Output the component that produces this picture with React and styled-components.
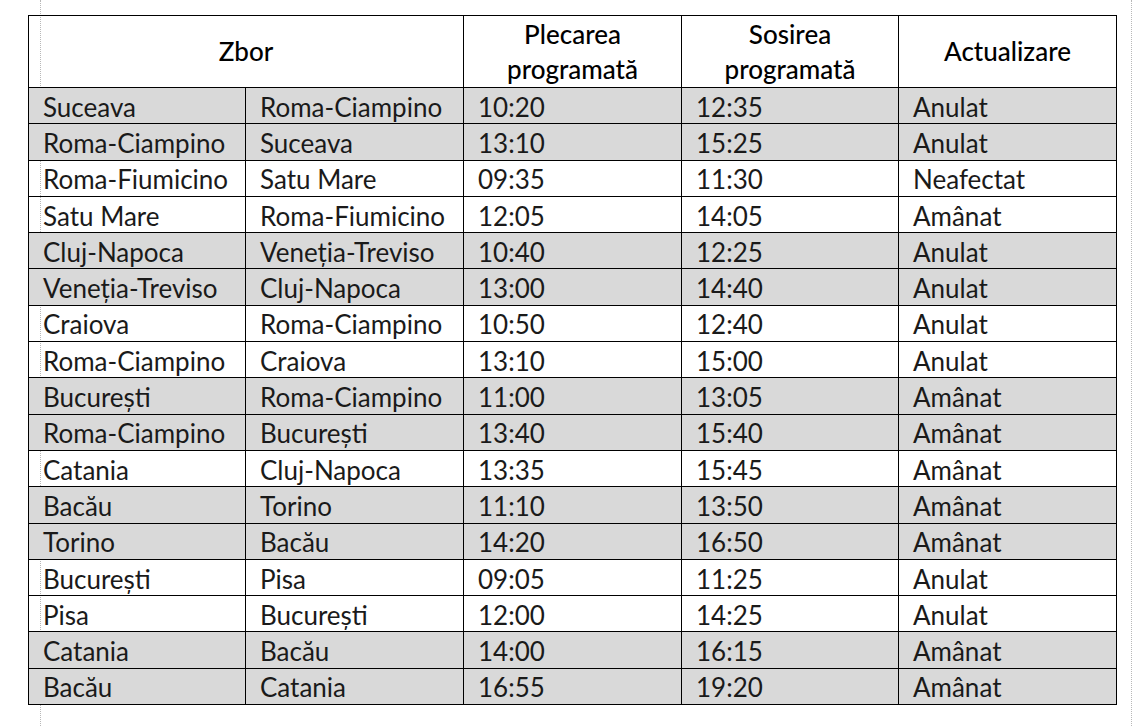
import React from 'react';
import styled, { createGlobalStyle } from 'styled-components';

const GlobalStyle = createGlobalStyle`
  html, body {
    margin: 0;
    padding: 0;
    background: #ffffff;
  }
  body {
    font-family: 'Lato', 'Carlito', 'Noto Sans', sans-serif;
    color: #000;
  }
`;

const flights = [
  ['Suceava', 'Roma-Ciampino', '10:20', '12:35', 'Anulat', true],
  ['Roma-Ciampino', 'Suceava', '13:10', '15:25', 'Anulat', true],
  ['Roma-Fiumicino', 'Satu Mare', '09:35', '11:30', 'Neafectat', false],
  ['Satu Mare', 'Roma-Fiumicino', '12:05', '14:05', 'Amânat', false],
  ['Cluj-Napoca', 'Veneția-Treviso', '10:40', '12:25', 'Anulat', true],
  ['Veneția-Treviso', 'Cluj-Napoca', '13:00', '14:40', 'Anulat', true],
  ['Craiova', 'Roma-Ciampino', '10:50', '12:40', 'Anulat', false],
  ['Roma-Ciampino', 'Craiova', '13:10', '15:00', 'Anulat', false],
  ['București', 'Roma-Ciampino', '11:00', '13:05', 'Amânat', true],
  ['Roma-Ciampino', 'București', '13:40', '15:40', 'Amânat', true],
  ['Catania', 'Cluj-Napoca', '13:35', '15:45', 'Amânat', false],
  ['Bacău', 'Torino', '11:10', '13:50', 'Amânat', true],
  ['Torino', 'Bacău', '14:20', '16:50', 'Amânat', true],
  ['București', 'Pisa', '09:05', '11:25', 'Anulat', false],
  ['Pisa', 'București', '12:00', '14:25', 'Anulat', false],
  ['Catania', 'Bacău', '14:00', '16:15', 'Amânat', true],
  ['Bacău', 'Catania', '16:55', '19:20', 'Amânat', true],
];

const Page = styled.div`
  position: relative;
  width: 1145px;
  height: 726px;
  padding: 15px 0 0 28px;
  box-sizing: border-box;
  overflow: hidden;
`;

const MarginGuide = styled.div`
  position: absolute;
  top: 0;
  bottom: 0;
  left: ${(p) => p.$x}px;
  width: 0;
  border-left: 1px dotted #b8b8b8;
`;

const Table = styled.table`
  position: relative;
  border-collapse: collapse;
  table-layout: fixed;
  width: 1088px;
  font-size: 26px;
`;

const HeadCell = styled.th`
  border: 1px solid #000;
  height: 71px;
  padding: 0 8px;
  font-weight: 500;
  line-height: 35px;
  text-align: center;
  vertical-align: middle;
  color: #000;
`;

const Row = styled.tr`
  height: 36.3px;
  background: ${(p) => (p.$shaded ? '#d9d9d9' : 'transparent')};
`;

const Cell = styled.td`
  border: 1px solid #000;
  padding: 2px 0 0 14px;
  line-height: 32px;
  white-space: nowrap;
  color: #1a1a1a;
`;

export default function App() {
  return (
    <>
      <GlobalStyle />
      <Page>
        <MarginGuide $x={40} />
        <MarginGuide $x={1131} />
        <Table>
          <colgroup>
            <col style={{ width: 217 }} />
            <col style={{ width: 218 }} />
            <col style={{ width: 218 }} />
            <col style={{ width: 217 }} />
            <col style={{ width: 218 }} />
          </colgroup>
          <thead>
            <tr>
              <HeadCell colSpan={2}>Zbor</HeadCell>
              <HeadCell>
                Plecarea
                <br />
                programată
              </HeadCell>
              <HeadCell>
                Sosirea
                <br />
                programată
              </HeadCell>
              <HeadCell>Actualizare</HeadCell>
            </tr>
          </thead>
          <tbody>
            {flights.map(([from, to, dep, arr, status, shaded], i) => (
              <Row key={i} $shaded={shaded}>
                <Cell>{from}</Cell>
                <Cell>{to}</Cell>
                <Cell>{dep}</Cell>
                <Cell>{arr}</Cell>
                <Cell>{status}</Cell>
              </Row>
            ))}
          </tbody>
        </Table>
      </Page>
    </>
  );
}
